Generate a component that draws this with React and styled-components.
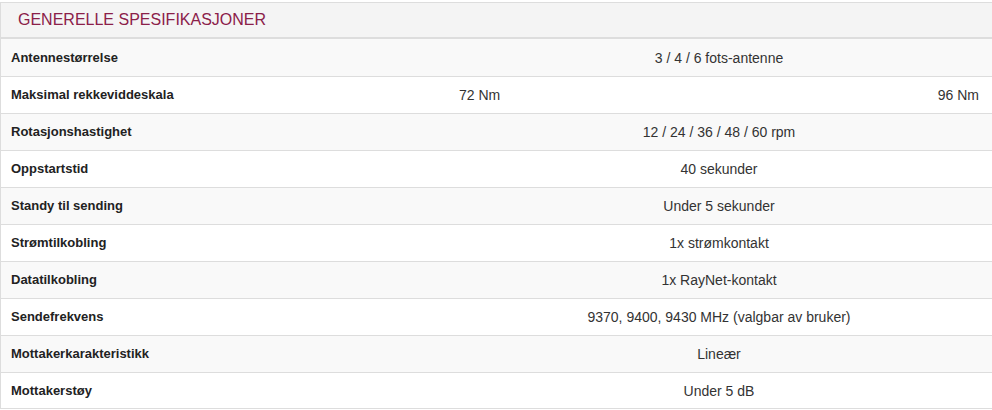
import React from 'react'
import styled, { createGlobalStyle } from 'styled-components'

const GlobalStyle = createGlobalStyle`
  html, body {
    margin: 0;
    padding: 0;
    background: #fff;
    overflow: hidden;
  }
  body {
    font-family: "Liberation Sans", Arial, sans-serif;
    color: #333;
  }
`

const Panel = styled.section`
  margin-top: 2px;
  width: 992px;
  border-top: 1px solid #ddd;
  border-left: 1px solid #ddd;
  box-sizing: border-box;
`

const Heading = styled.h3`
  margin: 0;
  height: 34px;
  padding: 0 17px;
  display: flex;
  align-items: center;
  background: #f4f4f4;
  border-bottom: 2px solid #ddd;
  color: #8b2049;
  font-size: 16px;
  font-weight: normal;
  text-transform: uppercase;
`

const Row = styled.div`
  display: grid;
  grid-template-columns: 450px 1fr;
  height: 37px;
  box-sizing: border-box;
  border-top: ${({ $first }) => ($first ? 'none' : '1px solid #ddd')};
  border-bottom: ${({ $last }) => ($last ? '1px solid #ddd' : 'none')};
  background: ${({ $striped }) => ($striped ? '#f9f9f9' : '#fff')};
  line-height: 18px;
`

const Label = styled.div`
  display: flex;
  align-items: center;
  padding: 0 10px;
  font-size: 13px;
  font-weight: bold;
  color: #222;
`

const Value = styled.div`
  display: flex;
  align-items: center;
  justify-content: ${({ $split }) => ($split ? 'space-between' : 'center')};
  padding: 0 13px 0 8px;
  font-size: 14px;
`

const specs = [
  ['Antennestørrelse', '3 / 4 / 6 fots-antenne'],
  ['Maksimal rekkeviddeskala', ['72 Nm', '96 Nm']],
  ['Rotasjonshastighet', '12 / 24 / 36 / 48 / 60 rpm'],
  ['Oppstartstid', '40 sekunder'],
  ['Standy til sending', 'Under 5 sekunder'],
  ['Strømtilkobling', '1x strømkontakt'],
  ['Datatilkobling', '1x RayNet-kontakt'],
  ['Sendefrekvens', '9370, 9400, 9430 MHz (valgbar av bruker)'],
  ['Mottakerkarakteristikk', 'Lineær'],
  ['Mottakerstøy', 'Under 5 dB'],
]

const App = () => {
  return (
    <>
      <GlobalStyle />
      <Panel>
        <Heading>Generelle spesifikasjoner</Heading>
        {specs.map(([label, value], i) => (
          <Row
            key={label}
            $first={i === 0}
            $last={i === specs.length - 1}
            $striped={i % 2 === 0}
          >
            <Label>{label}</Label>
            {Array.isArray(value) ? (
              <Value $split>
                {value.map((v) => (
                  <span key={v}>{v}</span>
                ))}
              </Value>
            ) : (
              <Value>{value}</Value>
            )}
          </Row>
        ))}
      </Panel>
    </>
  )
}

export default App
